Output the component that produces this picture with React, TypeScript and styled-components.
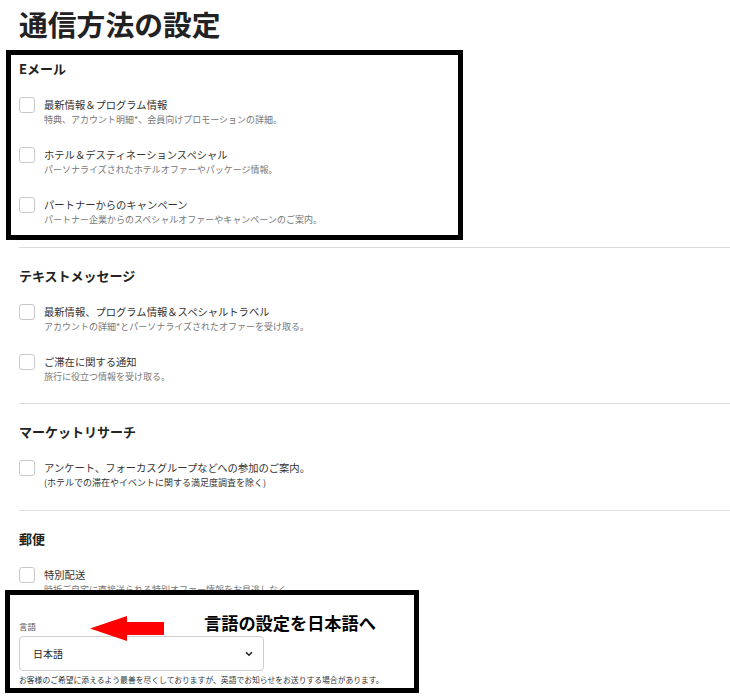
import styled, { createGlobalStyle } from 'styled-components';

const GlobalStyle = createGlobalStyle`
  body {
    margin: 0;
    background: #fff;
    font-family: "Noto Sans CJK JP", "Noto Sans", sans-serif;
    color: #222;
  }
`;

const Page = styled.div`
  width: 730px;
  box-sizing: border-box;
  padding-left: 19px;
`;

const Title = styled.h1`
  margin: 7px 0 0;
  font-size: 28.8px;
  line-height: 34px;
  font-weight: 700;
  color: #222;
`;

// black annotation frames drawn on top of the page
const Frame = styled.div<{ $width: number }>`
  position: relative;
  box-sizing: border-box;
  width: ${(p) => p.$width}px;
  border: 5px solid #000;
  background: #fff;
`;

const EmailFrame = styled(Frame)`
  margin: 9px 0 7px -13px;
  padding: 4px 0 8px 8px;
`;

const LanguageFrame = styled(Frame)`
  margin: -7px 0 0 -14px;
  height: 103px;
  padding: 24px 0 1px 9px;
`;

const Section = styled.section<{ $bottom?: number }>`
  border-top: 1px solid #dcdcdc;
  padding: 18px 0 ${(p) => p.$bottom ?? 0}px;
`;

const SectionTitle = styled.h2`
  margin: 0;
  font-size: 13px;
  line-height: 20px;
  font-weight: 700;
  color: #222;
`;

const Rows = styled.div`
  display: flex;
  flex-direction: column;
  gap: 20px;
  margin-top: 18px;
`;

const Row = styled.label`
  display: flex;
  align-items: flex-start;
  gap: 9px;
`;

const Check = styled.input.attrs({ type: 'checkbox' })`
  appearance: none;
  margin: 0;
  flex-shrink: 0;
  width: 16px;
  height: 16px;
  box-sizing: border-box;
  border: 1px solid #c9c9c9;
  border-radius: 3px;
  background: #fff;
`;

const Texts = styled.div`
  display: flex;
  flex-direction: column;
`;

const Label = styled.span`
  font-size: 10.3px;
  line-height: 16px;
  color: #333;
`;

const Desc = styled.span<{ $dark?: boolean }>`
  font-size: 9px;
  line-height: 14px;
  color: ${(p) => (p.$dark ? '#333' : '#777')};
`;

const FieldLabel = styled.div`
  font-size: 8.5px;
  line-height: 14px;
  color: #555;
`;

const SelectBox = styled.div`
  margin-top: 3px;
  width: 245px;
  height: 35px;
  box-sizing: border-box;
  border: 1px solid #cfcfcf;
  border-radius: 4px;
  display: flex;
  align-items: center;
  justify-content: space-between;
  padding: 0 10px 0 13px;
  font-size: 10px;
  color: #222;
`;

const Note = styled.div`
  margin-top: 2px;
  font-size: 7.8px;
  line-height: 14px;
  color: #333;
  white-space: nowrap;
`;

const Arrow = styled.svg`
  position: absolute;
  left: 80px;
  top: 21px;
`;

const CalloutText = styled.div`
  position: absolute;
  left: 194px;
  top: 18px;
  font-size: 17.2px;
  line-height: 20px;
  font-weight: 700;
  color: #000;
  white-space: nowrap;
`;

type Item = { label: string; desc: string; dark?: boolean };

const email: Item[] = [
  { label: '最新情報＆プログラム情報', desc: '特典、アカウント明細*、会員向けプロモーションの詳細。' },
  { label: 'ホテル＆デスティネーションスペシャル', desc: 'パーソナライズされたホテルオファーやパッケージ情報。' },
  { label: 'パートナーからのキャンペーン', desc: 'パートナー企業からのスペシャルオファーやキャンペーンのご案内。' },
];

const text: Item[] = [
  { label: '最新情報、プログラム情報＆スペシャルトラベル', desc: 'アカウントの詳細*とパーソナライズされたオファーを受け取る。' },
  { label: 'ご滞在に関する通知', desc: '旅行に役立つ情報を受け取る。' },
];

const research: Item[] = [
  { label: 'アンケート、フォーカスグループなどへの参加のご案内。', desc: '(ホテルでの滞在やイベントに関する満足度調査を除く)', dark: true },
];

const mail: Item[] = [
  { label: '特別配送', desc: '時折ご自宅に直接送られる特別オファー情報をお見逃しなく' },
];

const OptionList = ({ items }: { items: Item[] }) => (
  <Rows>
    {items.map((it) => (
      <Row key={it.label}>
        <Check />
        <Texts>
          <Label>{it.label}</Label>
          <Desc $dark={it.dark}>{it.desc}</Desc>
        </Texts>
      </Row>
    ))}
  </Rows>
);

const App = () => (
  <Page>
    <GlobalStyle />
    <Title>通信方法の設定</Title>

    <EmailFrame $width={457}>
      <SectionTitle>Eメール</SectionTitle>
      <OptionList items={email} />
    </EmailFrame>

    <Section $bottom={19}>
      <SectionTitle>テキストメッセージ</SectionTitle>
      <OptionList items={text} />
    </Section>

    <Section $bottom={20}>
      <SectionTitle>マーケットリサーチ</SectionTitle>
      <OptionList items={research} />
    </Section>

    <Section>
      <SectionTitle>郵便</SectionTitle>
      <OptionList items={mail} />
    </Section>

    <LanguageFrame $width={414}>
      <FieldLabel>言語</FieldLabel>
      <SelectBox>
        <span>日本語</span>
        <svg width="8" height="6" viewBox="0 0 8 6">
          <path d="M1 1.2 L4 4.2 L7 1.2" fill="none" stroke="#222" strokeWidth="1.6" />
        </svg>
      </SelectBox>
      <Note>お客様のご希望に添えるよう最善を尽くしておりますが、英語でお知らせをお送りする場合があります。</Note>

      <Arrow width="74" height="25" viewBox="0 0 74 25">
        <path d="M0 12.5 L37 0 L37 6 L74 6 L74 19 L37 19 L37 25 Z" fill="#ff0000" />
      </Arrow>
      <CalloutText>言語の設定を日本語へ</CalloutText>
    </LanguageFrame>
  </Page>
);

export default App;
